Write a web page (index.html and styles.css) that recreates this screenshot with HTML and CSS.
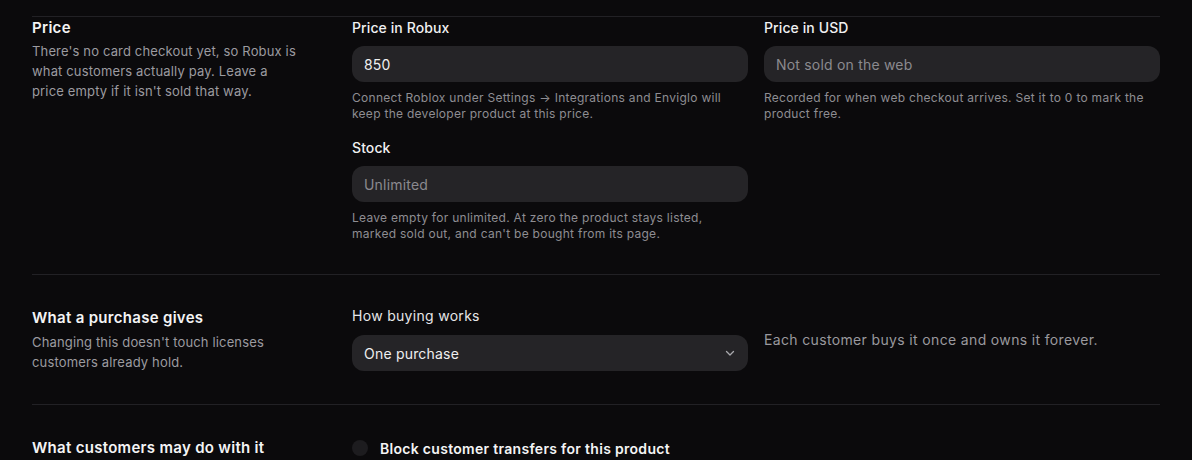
FILE: index.html
```html
<!DOCTYPE html>
<html lang="en">
<head>
<meta charset="utf-8">
<title>Product pricing</title>
<link rel="stylesheet" href="styles.css">
</head>
<body>
<div class="page">
  <section class="row first">
    <div class="intro">
      <h2 class="title">Price</h2>
      <p class="desc">There's no card checkout yet, so Robux is<br>what customers actually pay. Leave a<br>price empty if it isn't sold that way.</p>
    </div>
    <div class="fields">
      <div class="field">
        <label class="label">Price in Robux</label>
        <div class="input"><span class="value">850</span></div>
        <p class="help">Connect Roblox under Settings → Integrations and Enviglo will<br>keep the developer product at this price.</p>
      </div>
      <div class="field">
        <label class="label">Price in USD</label>
        <div class="input"><span class="placeholder">Not sold on the web</span></div>
        <p class="help">Recorded for when web checkout arrives. Set it to 0 to mark the<br>product free.</p>
      </div>
      <div class="field">
        <label class="label">Stock</label>
        <div class="input"><span class="placeholder">Unlimited</span></div>
        <p class="help">Leave empty for unlimited. At zero the product stays listed,<br>marked sold out, and can't be bought from its page.</p>
      </div>
    </div>
  </section>

  <section class="row">
    <div class="intro">
      <h2 class="title">What a purchase gives</h2>
      <p class="desc">Changing this doesn't touch licenses<br>customers already hold.</p>
    </div>
    <div class="fields">
      <div class="field">
        <label class="label normal">How buying works</label>
        <div class="input select">
          <span class="value">One purchase</span>
          <svg class="chevron" width="12" height="12" viewBox="0 0 12 12" aria-hidden="true"><path d="M2.5 4.5 L6 8 L9.5 4.5" fill="none" stroke="#a9a9ad" stroke-width="1.3" stroke-linecap="round" stroke-linejoin="round"/></svg>
        </div>
      </div>
      <div class="field">
        <p class="note">Each customer buys it once and owns it forever.</p>
      </div>
    </div>
  </section>

  <section class="row">
    <div class="intro">
      <h2 class="title">What customers may do with it</h2>
    </div>
    <div class="fields">
      <div class="check">
        <span class="box"></span>
        <span class="check-label">Block customer transfers for this product</span>
      </div>
    </div>
  </section>
</div>
</body>
</html>
```

FILE: styles.css
```css
* { box-sizing: border-box; }

html, body {
  margin: 0;
  padding: 0;
  background: #0b0a0c;
  height: 460px;
  overflow: hidden;
}

body {
  font-family: Inter, "Noto Sans", "DejaVu Sans", sans-serif;
  color: #f2f2f3;
}

.page {
  padding: 16px 32px 0;
}

.row {
  display: grid;
  grid-template-columns: 304px 1fr;
  gap: 16px;
  border-top: 1px solid #222125;
  padding: 31px 0 32px;
}

.row.first {
  padding-top: 0;
}

.title {
  margin: 0;
  font-size: 15px;
  line-height: 22px;
  font-weight: 600;
  letter-spacing: 0.3px;
  color: #f4f4f5;
}

.row:not(.first) .title {
  line-height: 24px;
}

.desc {
  margin: 2px 0 0;
  font-size: 13px;
  line-height: 20px;
  letter-spacing: 0.15px;
  color: #9c9ba0;
}

.fields {
  display: grid;
  grid-template-columns: 1fr 1fr;
  column-gap: 16px;
  row-gap: 15px;
  align-items: start;
}

.field {
  display: flex;
  flex-direction: column;
}

.label {
  font-size: 14px;
  line-height: 20px;
  font-weight: 500;
  letter-spacing: 0.1px;
  color: #f0f0f1;
  margin-bottom: 8px;
}

.row.first .label {
  margin-top: 1px;
}

.label.normal {
  font-weight: 400;
  margin-bottom: 9px;
  letter-spacing: 0.3px;
  color: #e6e6e8;
}

.input {
  height: 36px;
  border-radius: 12px;
  background: #252427;
  display: flex;
  align-items: center;
  padding: 0 12px;
  font-size: 14px;
  letter-spacing: 0.2px;
}

.value { color: #efeff0; }
.placeholder { color: #8b8a8f; }

.select {
  justify-content: space-between;
}

.chevron { margin-right: 0; }

.help {
  margin: 8px 0 0;
  font-size: 12px;
  line-height: 16px;
  letter-spacing: 0.28px;
  color: #8e8d92;
}

.note {
  margin: 24px 0 0;
  font-size: 14px;
  line-height: 20px;
  letter-spacing: 0.35px;
  color: #9a999e;
}

.check {
  display: flex;
  align-items: center;
  gap: 12px;
  height: 24px;
}

.box {
  width: 16px;
  height: 16px;
  border-radius: 50%;
  background: #1d1c1f;
}

.check-label {
  font-size: 14px;
  font-weight: 600;
  letter-spacing: 0.3px;
  color: #f4f4f5;
}
```
